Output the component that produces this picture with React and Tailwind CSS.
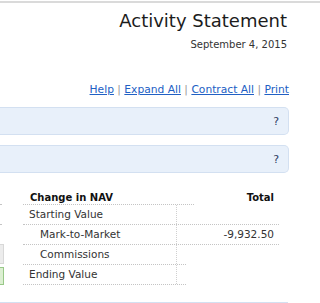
import React from "react";

const rows = [
  { label: "Starting Value", indent: false, value: "", line: "w-[256px]" },
  { label: "Mark-to-Market", indent: true, value: "-9,932.50", line: "w-[256px]" },
  { label: "Commissions", indent: true, value: "", line: "w-[163px]" },
  { label: "Ending Value", indent: false, value: "", line: "w-[163px]" },
];

const Panel = ({ className = "" }) => (
  <div
    className={`mr-[31px] h-[28px] flex items-center justify-end pr-[9px] bg-[#e8f0fa] border border-l-0 border-[#d3e0f1] rounded-r-[5px] ${className}`}
  >
    <span className="text-[11px] leading-none text-[#2c3c62]">?</span>
  </div>
);

const App = () => {
  return (
    <div className="w-[320px] h-[303px] overflow-hidden bg-white text-[#333] font-['DejaVu_Sans','Verdana',sans-serif]">
      <div className="mt-px h-[2px] bg-[#dadada]" />

      <div className="pr-[33px] text-right">
        <h1 className="mt-[7px] text-[18px] leading-[22px] text-[#1c1c1c]">Activity Statement</h1>
        <p className="mt-[5.5px] text-[10px] leading-[14px] text-[#333]">September 4, 2015</p>
      </div>

      <div className="mt-[31.5px] pr-[31px] text-right text-[10.7px] leading-[14px]">
        <a href="#" className="text-[#2160c4] underline">Help</a>
        <span className="text-[#999]"> | </span>
        <a href="#" className="text-[#2160c4] underline">Expand All</a>
        <span className="text-[#999]"> | </span>
        <a href="#" className="text-[#2160c4] underline">Contract All</a>
        <span className="text-[#999]"> | </span>
        <a href="#" className="text-[#2160c4] underline">Print</a>
      </div>

      <Panel className="mt-[10px]" />
      <Panel className="mt-[10px]" />

      <div className="mt-[15px] flex">
        <div className="w-[4px] flex flex-col">
          <div className="mt-[16px] h-px w-[2px] bg-[#c4c4c4]" />
          <div className="mt-[19px] h-px w-[2px] bg-[#c4c4c4]" />
          <div className="mt-[19px] h-[20px] bg-[#ececec] border border-l-0 border-[#d8d8d8]" />
          <div className="mt-[3px] h-[18px] bg-[#dcefd2] border border-l-0 border-[#98c888]" />
        </div>

        <div className="ml-[19px] w-[256px] text-[10.5px]">
          <div className="flex h-[16px] items-center pt-[2px] text-[10px] font-bold text-[#111]">
            <div className="w-[154px] pl-[7px]">Change in NAV</div>
            <div className="flex-1 pr-[5px] text-right">Total</div>
          </div>
          <div className="h-px w-[171px] border-b border-dotted border-[#c4c4c4]" />
          {rows.map((r) => (
            <div key={r.label}>
              <div className="flex h-[19px] items-center">
                <div
                  className={`w-[154px] h-full flex items-center border-r border-dotted border-[#d0d0d0] ${
                    r.indent ? "pl-[17px]" : "pl-[6px]"
                  }`}
                >
                  {r.label}
                </div>
                <div className="flex-1 pr-[5px] text-right">{r.value}</div>
              </div>
              <div className={`h-px border-b border-dotted border-[#c4c4c4] ${r.line}`} />
            </div>
          ))}
        </div>
      </div>

      <div className="mt-[17px] h-px w-[288px] bg-[#d3e0f1]" />
    </div>
  );
};

export default App;
